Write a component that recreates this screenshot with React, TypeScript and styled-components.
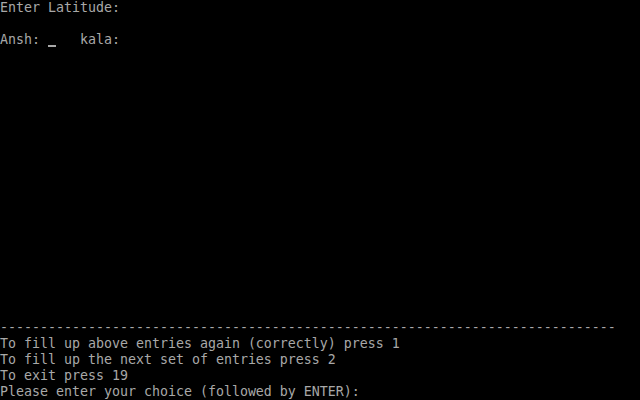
import React from "react";
import styled, { createGlobalStyle } from "styled-components";

const Global = createGlobalStyle`
  html, body { margin: 0; padding: 0; background: #000; }
  body { width: 640px; height: 400px; overflow: hidden; }
`;

const Screen = styled.div`
  width: 640px;
  height: 400px;
  background: #000;
  color: #a8a8a8;
  font-family: "DejaVu Sans Mono", "Liberation Mono", monospace;
  font-size: 13.29px;
  display: flex;
  flex-direction: column;
  justify-content: space-between;
`;

const Block = styled.div`
  display: flex;
  flex-direction: column;
`;

const Line = styled.div`
  height: 16px;
  line-height: 16px;
  white-space: pre;
  overflow: hidden;
`;

const Cursor = styled.span`
  display: inline-block;
  width: 8px;
  height: 16px;
  vertical-align: top;
  box-sizing: border-box;
  border-bottom: 2px solid #a8a8a8;
  transform: translateY(-1px);
`;

export default function App() {
  return (
    <>
      <Global />
      <Screen>
        <Block>
          <Line>Enter Latitude:</Line>
          <Line> </Line>
          <Line>
            {"Ansh: "}
            <Cursor />
            {"   kala:"}
          </Line>
        </Block>
        <Block>
          <Line>{"-".repeat(77)}</Line>
          <Line>To fill up above entries again (correctly) press 1</Line>
          <Line>To fill up the next set of entries press 2</Line>
          <Line>To exit press 19</Line>
          <Line>Please enter your choice (followed by ENTER):</Line>
        </Block>
      </Screen>
    </>
  );
}
